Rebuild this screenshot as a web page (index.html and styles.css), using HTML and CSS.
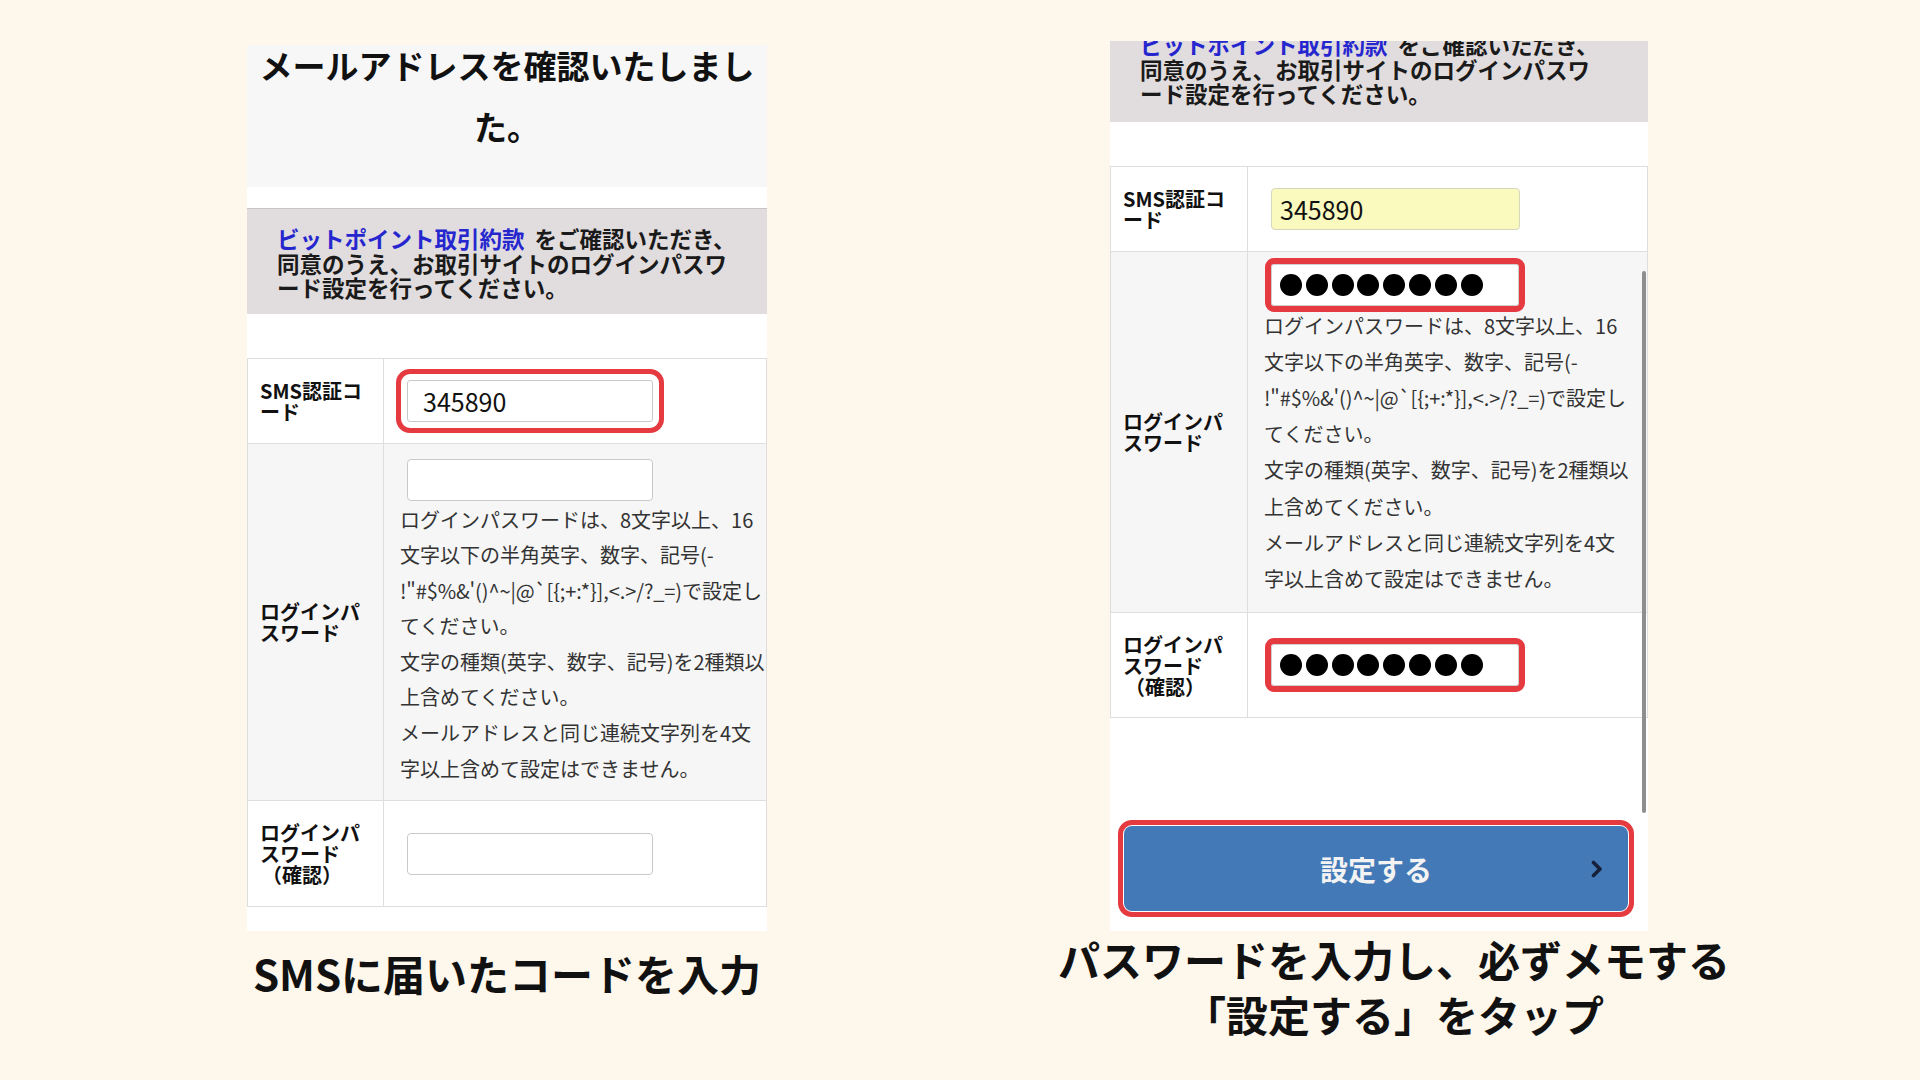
FILE: index.html
```html
<!DOCTYPE html>
<html lang="ja">
<head>
<meta charset="utf-8">
<title>パスワード設定の手順</title>
<link rel="stylesheet" href="styles.css">
</head>
<body>
<main class="stage">
  <figure class="step step-left">
    <div class="phone phone-left">
      <div class="page-head"><h1 class="page-title">メールアドレスを確認いたしまし<br>た。</h1></div>
      <div class="notice">
        <p><a class="terms" href="#">ビットポイント取引約款</a> をご確認いただき、<br>同意のうえ、お取引サイトのログインパスワ<br>ード設定を行ってください。</p>
      </div>
      <table class="form">
        <tr class="row-sms">
          <th>SMS認証コ<br>ード</th>
          <td><input class="field marked" type="text" value="345890"></td>
        </tr>
        <tr class="row-pw">
          <th>ログインパ<br>スワード</th>
          <td>
            <input class="field" type="password" value="">
            <p class="hint">ログインパスワードは、8文字以上、16<br>文字以下の半角英字、数字、記号(-<br><span class="sym">!"#$%&amp;'()^~|@`[{;+:*}],&lt;.&gt;/?_=)</span>で設定し<br>てください。<br>文字の種類(英字、数字、記号)を2種類以<br>上含めてください。<br>メールアドレスと同じ連続文字列を4文<br>字以上含めて設定はできません。</p>
          </td>
        </tr>
        <tr class="row-confirm">
          <th>ログインパ<br>スワード<br><span class="paren">（確認）</span></th>
          <td><input class="field" type="password" value=""></td>
        </tr>
      </table>
    </div>
    <figcaption class="caption">SMSに届いたコードを入力</figcaption>
  </figure>

  <figure class="step step-right">
    <div class="phone phone-right">
      <div class="notice">
        <p><a class="terms" href="#">ビットポイント取引約款</a> をご確認いただき、<br>同意のうえ、お取引サイトのログインパスワ<br>ード設定を行ってください。</p>
      </div>
      <table class="form">
        <tr class="row-sms">
          <th>SMS認証コ<br>ード</th>
          <td><input class="field autofill" type="text" value="345890"></td>
        </tr>
        <tr class="row-pw">
          <th>ログインパ<br>スワード</th>
          <td>
            <div class="field dots marked-tight"><span class="dot"></span><span class="dot"></span><span class="dot"></span><span class="dot"></span><span class="dot"></span><span class="dot"></span><span class="dot"></span><span class="dot"></span></div>
            <p class="hint">ログインパスワードは、8文字以上、16<br>文字以下の半角英字、数字、記号(-<br><span class="sym">!"#$%&amp;'()^~|@`[{;+:*}],&lt;.&gt;/?_=)</span>で設定し<br>てください。<br>文字の種類(英字、数字、記号)を2種類以<br>上含めてください。<br>メールアドレスと同じ連続文字列を4文<br>字以上含めて設定はできません。</p>
          </td>
        </tr>
        <tr class="row-confirm">
          <th>ログインパ<br>スワード<br><span class="paren">（確認）</span></th>
          <td>
            <div class="field dots marked-tight"><span class="dot"></span><span class="dot"></span><span class="dot"></span><span class="dot"></span><span class="dot"></span><span class="dot"></span><span class="dot"></span><span class="dot"></span></div>
          </td>
        </tr>
      </table>
      <button class="submit" type="button">
        <span class="submit-label">設定する</span>
        <svg class="chevron" width="12" height="18" viewBox="0 0 12 18" aria-hidden="true"><path d="M2.5 2.5 L9 9 L2.5 15.5" fill="none" stroke="#17203a" stroke-width="3.6" stroke-linecap="round" stroke-linejoin="round"/></svg>
      </button>
      <div class="scrollbar"></div>
    </div>
    <figcaption class="caption caption-right">パスワードを入力し、必ずメモする<br>「設定する」をタップ</figcaption>
  </figure>
</main>
</body>
</html>
```

FILE: styles.css
```css
* { box-sizing: border-box; }
html, body { margin: 0; padding: 0; }
body {
  width: 1920px;
  height: 1080px;
  overflow: hidden;
  background: #fdf7ec;
  font-family: "Noto Sans CJK JP", "Noto Sans", sans-serif;
  color: #111;
}
.stage {
  display: flex;
  align-items: flex-start;
  gap: 343px;
  padding-left: 247px;
}
.step {
  margin: 0;
  display: flex;
  flex-direction: column;
  align-items: center;
}
.step-left { width: 520px; }
.step-right { width: 538px; }

.phone {
  width: 100%;
  background: #fff;
  overflow: hidden;
  position: relative;
}
.phone-left { margin-top: 45px; height: 886px; }
.phone-right { margin-top: 41px; height: 890px; }

.page-head {
  background: #f7f7f7;
  padding: 0 0 30px;
  text-align: center;
}
.page-title {
  margin: -10px 0 0;
  font-size: 33px;
  line-height: 61px;
  font-weight: 700;
  color: #111;
  white-space: nowrap;
}

.notice {
  margin-top: 21px;
  background: #e1dcdd;
  border-top: 1px solid #c9c4c5;
  padding: 17px 0 14px 30px;
}
.phone-right .notice {
  margin-top: -27px;
  padding-bottom: 16px;
}
.notice p {
  margin: 0;
  font-size: 22.5px;
  line-height: 24.5px;
  font-weight: 700;
  color: #1a1a1a;
  white-space: nowrap;
  word-spacing: 5px;
}
.terms { color: #2626cf; text-decoration: none; }

.form {
  margin-top: 44px;
  width: 100%;
  border-collapse: collapse;
}
.form th, .form td {
  border: 1px solid #dedede;
  padding: 0;
  vertical-align: middle;
}
.form th {
  width: 136px;
  padding-left: 12px;
  text-align: left;
  font-size: 20px;
  line-height: 21px;
  font-weight: 700;
  color: #111;
  white-space: nowrap;
}
.paren { display: inline-block; margin-left: 2px; }
.phone-right .form th { width: 137px; }
.form td { padding-left: 23px; }
.row-sms th, .row-sms td { height: 85px; }
.row-pw th, .row-pw td { background: #f6f6f6; }
.row-pw td { padding-top: 15px; padding-bottom: 14px; vertical-align: top; }
.phone-right .row-pw td { padding-top: 12px; padding-bottom: 15px; }
.row-confirm th, .row-confirm td { height: 106px; }
.phone-right .row-confirm th, .phone-right .row-confirm td { height: 105px; }

.field {
  display: block;
  width: 246px;
  height: 42px;
  margin: 0;
  border: 1px solid #c9c9c9;
  border-radius: 4px;
  background: #fff;
  font-family: "Noto Sans CJK JP", "Noto Sans", sans-serif;
  font-size: 25px;
  color: #111;
  padding: 0 0 0 15px;
}
.marked {
  outline: 5px solid #e53a40;
  outline-offset: 6px;
  border-radius: 3px;
}
.autofill {
  width: 249px;
  background: #fafabf;
  border-color: #d6d6bd;
  padding-left: 8px;
}
.dots {
  width: 248px;
  display: flex;
  align-items: center;
  gap: 3.8px;
  padding-left: 8px;
  border-color: #d0d0d0;
}
.dot {
  width: 22px;
  height: 22px;
  border-radius: 50%;
  background: #000;
  flex: none;
}
.marked-tight {
  outline: 6px solid #e53a40;
  outline-offset: 0;
  border-radius: 3px;
}

.hint {
  margin: 1px 0 0 -7px;
  font-size: 20px;
  line-height: 35.6px;
  color: #333;
  white-space: nowrap;
}
.phone-right .hint { line-height: 36.2px; margin-top: 2px; }
.sym { letter-spacing: -0.1px; }

.submit {
  display: grid;
  grid-template-columns: 1fr auto 1fr;
  align-items: center;
  width: 504px;
  height: 85px;
  margin: 108px 0 0 14px;
  border: 0;
  border-radius: 8px;
  background: #4379b6;
  color: #f3f3f3;
  font-family: "Noto Sans CJK JP", "Noto Sans", sans-serif;
  font-size: 28px;
  font-weight: 700;
  outline: 5px solid #e53a40;
  outline-offset: 1px;
  padding: 0;
}
.submit-label { grid-column: 2; }
.chevron { grid-column: 3; justify-self: end; margin-right: 25px; }

.scrollbar {
  position: absolute;
  left: 532px;
  top: 230px;
  width: 4px;
  height: 542px;
  border-radius: 2px;
  background: #8e8e8e;
}

.caption {
  font-size: 42px;
  line-height: 55px;
  font-weight: 700;
  color: #111;
  text-align: center;
  white-space: nowrap;
  margin-top: 14px;
}
.caption-right { margin-top: 0; padding-left: 30px; }
```
